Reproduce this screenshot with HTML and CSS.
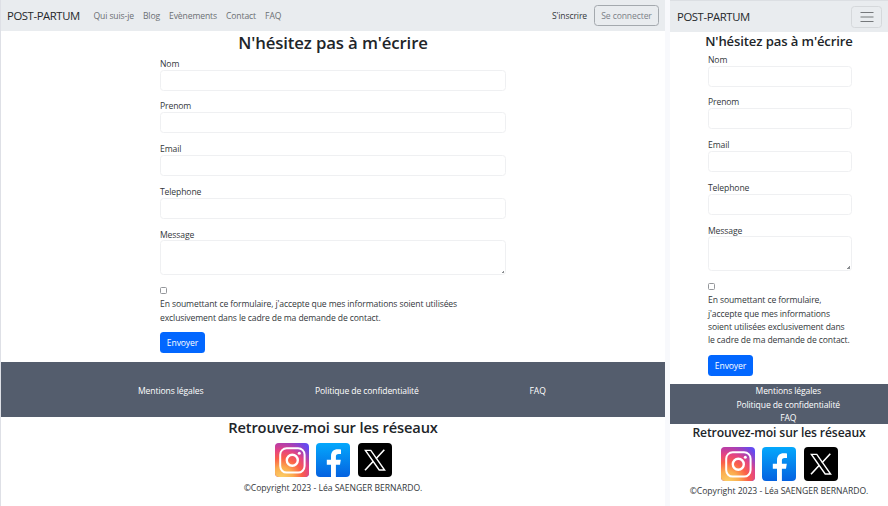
FILE: index.html
```
<!DOCTYPE html>
<html lang="fr">
<head>
<meta charset="utf-8">
<title>POST-PARTUM</title>
<link rel="stylesheet" href="styles.css">
</head>
<body>
<svg class="defs" aria-hidden="true">
  <defs>
    <linearGradient id="ig-top" x1="0" y1="0" x2="1" y2="0"><stop offset="0" stop-color="#b63aa8"/><stop offset="1" stop-color="#5f4cf5"/></linearGradient>
    <radialGradient id="ig-warm" cx=".2" cy="1.05" r="1.2"><stop offset="0" stop-color="#fbd36a"/><stop offset=".28" stop-color="#fbac4f"/><stop offset=".5" stop-color="#fb6048"/><stop offset=".7" stop-color="#e84480" stop-opacity=".95"/><stop offset="1" stop-color="#b63aa8" stop-opacity="0"/></radialGradient>
    <linearGradient id="fb-blue" x1="0" y1="0" x2="0" y2="1"><stop offset="0" stop-color="#04a8fc"/><stop offset="1" stop-color="#0562e0"/></linearGradient>
    <symbol id="instagram" viewBox="0 0 34 34">
      <rect width="34" height="34" rx="4" fill="url(#ig-top)"/>
      <rect width="34" height="34" rx="4" fill="url(#ig-warm)"/>
      <rect x="5.2" y="5.2" width="24.4" height="24.4" rx="6.5" fill="none" stroke="#fff" stroke-width="2"/>
      <circle cx="17.3" cy="17.2" r="5.5" fill="none" stroke="#fff" stroke-width="2.4"/>
      <circle cx="24.3" cy="10.3" r="1.5" fill="#fff"/>
    </symbol>
    <symbol id="facebook" viewBox="0 0 34 34">
      <rect width="34" height="34" rx="4" fill="url(#fb-blue)"/>
      <path fill="#fff" d="M15 34V21.7h-4.2v-5H15v-3.4c0-4.7 2.6-7 6.7-7 1.3 0 2.4.1 3.3.3v4.300h-2.300c-2.200 0-2.800 1-2.800 2.700v3.100h4.900l-.8 5h-4.100V34z"/>
    </symbol>
    <symbol id="x-logo" viewBox="0 0 34 34">
      <rect width="34" height="34" rx="4"/>
      <path fill="none" stroke="#fff" stroke-width="1.4" d="M7.4 7.4h5.400l13.800 19.600h-5.400z"/>
      <path fill="none" stroke="#fff" stroke-width="1.6" d="M26.300 6.700l-8.300 9M15.300 18.300l-8.300 9"/>
    </symbol>
  </defs>
</svg>
<div class="screens">
  <section class="screen desktop">
    <nav class="navbar">
      <a class="brand">POST-PARTUM</a>
      <div class="links"><a>Qui suis-je</a><a>Blog</a><a>Evènements</a><a>Contact</a><a>FAQ</a></div>
      <a class="signup">S'inscrire</a>
      <button class="login">Se connecter</button>
    </nav>
    <main>
      <h1>N'hésitez pas à m'écrire</h1>
      <form>
        <div class="field"><label>Nom</label><input type="text"></div>
        <div class="field"><label>Prenom</label><input type="text"></div>
        <div class="field"><label>Email</label><input type="text"></div>
        <div class="field"><label>Telephone</label><input type="text"></div>
        <div class="field"><label>Message</label><textarea></textarea></div>
        <span class="check"></span>
        <p class="consent">En soumettant ce formulaire, j'accepte que mes informations soient utilisées<br>exclusivement dans le cadre de ma demande de contact.</p>
        <button class="send" type="button">Envoyer</button>
      </form>
    </main>
    <div class="legal"><a class="mentions">Mentions légales</a><a class="privacy">Politique de confidentialité</a><a class="faq">FAQ</a></div>
    <footer>
      <h2>Retrouvez-moi sur les réseaux</h2>
      <div class="social"><svg><use href="#instagram"/></svg><svg><use href="#facebook"/></svg><svg><use href="#x-logo"/></svg></div>
      <p class="copyright">©Copyright 2023 - Léa SAENGER BERNARDO.</p>
    </footer>
  </section>
  <section class="screen mobile">
    <nav class="navbar">
      <a class="brand">POST-PARTUM</a>
      <button class="toggler" aria-label="Menu"><svg viewBox="0 0 14 12"><path d="M.5 1.500h13M.5 6h13M.5 10.500h13"/></svg></button>
    </nav>
    <main>
      <h1>N'hésitez pas à m'écrire</h1>
      <form>
        <div class="field"><label>Nom</label><input type="text"></div>
        <div class="field"><label>Prenom</label><input type="text"></div>
        <div class="field"><label>Email</label><input type="text"></div>
        <div class="field"><label>Telephone</label><input type="text"></div>
        <div class="field"><label>Message</label><textarea></textarea></div>
        <span class="check"></span>
        <p class="consent">En soumettant ce formulaire,<br>j'accepte que mes informations<br>soient utilisées exclusivement dans<br>le cadre de ma demande de contact.</p>
        <button class="send" type="button">Envoyer</button>
      </form>
    </main>
    <div class="legal"><a>Mentions légales</a><a>Politique de confidentialité</a><a>FAQ</a></div>
    <footer>
      <h2>Retrouvez-moi sur les réseaux</h2>
      <div class="social"><svg><use href="#instagram"/></svg><svg><use href="#facebook"/></svg><svg><use href="#x-logo"/></svg></div>
      <p class="copyright">©Copyright 2023 - Léa SAENGER BERNARDO.</p>
    </footer>
  </section>
</div>
</body>
</html>
```
FILE: styles.css
```
* { box-sizing: border-box; }
body {
  margin: 0;
  height: 506px;
  overflow: hidden;
  background: #f8f9fc;
  color: #33373b;
  font: 8.6px/13.3px "Open Sans", "Noto Sans", sans-serif;
  letter-spacing: -.12px;
}
.defs { position: absolute; width: 0; height: 0; }
.screens { display: flex; height: 506px; }
.screen { background: #fff; overflow: hidden; white-space: nowrap; }
.desktop { width: 665px; border-left: 1px solid #dee0e6; }
.mobile { width: 218px; margin-left: 5px; }
h1, h2, p { margin: 0; }
h1, h2 { color: #212529; font-weight: 600; text-align: center; }
button, input, textarea { font: inherit; letter-spacing: inherit; }

.navbar {
  display: flex;
  align-items: center;
  height: 31px;
  padding: 0 6px;
  background: #e9ecef;
}
.navbar a { padding-top: 2px; }
.brand { width: 86.5px; font-size: 11.3px; letter-spacing: -.4px; color: #25282b; }
.navbar .brand { padding-top: 1px; }
.links { display: flex; gap: 9px; color: #6b6f73; }
.signup { margin-left: auto; margin-right: 7px; }
.login {
  width: 65px;
  height: 21px;
  padding: 2px 0 0;
  border: 1px solid #a4a9ae;
  border-radius: 3.5px;
  background: none;
  color: #7b8187;
}
.toggler {
  display: flex;
  align-items: center;
  justify-content: center;
  width: 31px;
  height: 22px;
  margin-left: auto;
  padding: 0;
  border: 1px solid #d5d8db;
  border-radius: 3.5px;
  background: none;
}
.mobile .navbar { height: 32px; padding: 0 6px 0 7px; border-top: 1px solid #dcdfe3; }
.toggler svg { width: 14px; height: 12px; fill: none; stroke: #75787b; stroke-width: 1.2; }

.desktop main { height: 331px; }
.desktop h1 { height: 25.4px; font-size: 16.75px; line-height: 23px; }
.desktop form { width: 346px; margin-left: 159px; }
.mobile main { height: 352.3px; }
.mobile h1 { height: 20.4px; font-size: 13.1px; line-height: 18px; }
.mobile form { width: 143.5px; margin-left: 38px; }
.field { height: 42.7px; }
.field:nth-of-type(5) { height: 59.4px; }
label { display: block; height: 13.3px; padding-top: 1.4px; }
input, textarea {
  display: block;
  width: 100%;
  height: 21px;
  margin: 0;
  padding: 0 6px;
  border: 1px solid #eff0f2;
  border-radius: 3.5px;
  background: #fff;
}
textarea {
  height: 34.5px;
  resize: none;
  background: linear-gradient(135deg, transparent 50%, #8b8e91 50%) right 1px bottom 1px / 3px 3px no-repeat #fff;
}
.check {
  display: block;
  width: 7px;
  height: 7px;
  border: 1px solid #94979b;
  border-radius: 1.5px;
}
.consent { margin-top: 4.8px; }
.send {
  display: block;
  width: 45px;
  height: 21px;
  margin-top: 7.5px;
  padding: 2px 0 0;
  border: 0;
  border-radius: 3.5px;
  background: #0267ff;
  color: #fff;
}

.legal { display: flex; background: #545d6d; color: #fff; }
.desktop .legal { height: 55px; align-items: center; padding: 4px 0 0 137px; }
.mentions { width: 177px; }
.privacy { width: 214.5px; }
.mobile .legal { height: 39.7px; flex-direction: column; align-items: center; padding: 1px 0 0 18.5px; }
footer { text-align: center; }
.desktop h2 { font-size: 14.65px; line-height: 20px; height: 26px; }
.mobile h2 { font-size: 12.15px; line-height: 17px; height: 23px; }
.social { display: flex; justify-content: center; gap: 7.5px; }
.social svg { width: 34px; height: 34px; }
.copyright { margin-top: 4.5px; letter-spacing: -.02px; }
```
